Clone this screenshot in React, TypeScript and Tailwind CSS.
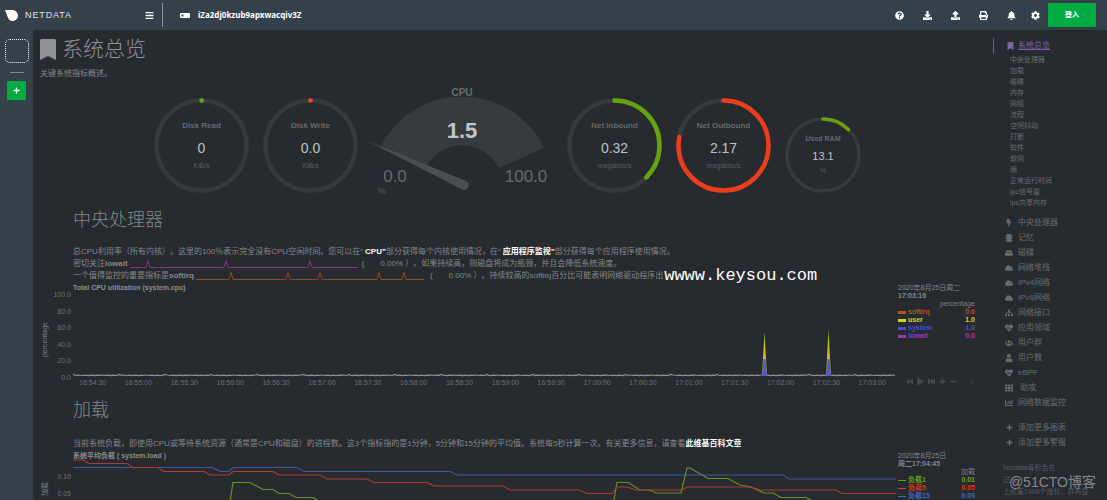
import { ReactNode } from 'react';
import {
  FaBars, FaBell, FaBolt, FaBookmark, FaChartBar, FaCloud, FaCog, FaDownload, FaFastForward, FaBackward,
  FaHdd, FaHeartbeat, FaMicrochip, FaMinus, FaPlay, FaPlus, FaPrint, FaQuestionCircle, FaSitemap, FaSort,
  FaTh, FaUpload, FaUser, FaUsers,
} from 'react-icons/fa';

interface RingProps { title: string; value: string; unit: string; percent: number; color: string; small?: boolean; }
interface LegendRow { name: string; value: string; color: string; bar: string; }
interface ChartProps {
  title: string;
  unit: string;
  axis: ReactNode;
  date: string[];
  legend: LegendRow[];
  children: ReactNode;
}

const subMenu = ['中央处理器', '加载', '磁碟', '内存', '网络', '流程', '空闲抖动', '打断', '软件', '软网', '熵', '正常运行时间', 'ipc信号量', 'ipc共享内存'];

const mainMenu = [
  { icon: <FaBolt />, label: '中央处理器' },
  { icon: <FaMicrochip />, label: '记忆' },
  { icon: <FaHdd />, label: '磁碟' },
  { icon: <FaCloud />, label: '网络堆栈' },
  { icon: <FaCloud />, label: 'IPv4网络' },
  { icon: <FaCloud />, label: 'IPv6网络' },
  { icon: <FaSitemap />, label: '网络接口' },
  { icon: <FaHeartbeat />, label: '应用领域' },
  { icon: <FaUsers />, label: '用户群' },
  { icon: <FaUser />, label: '用户数' },
  { icon: <FaHeartbeat />, label: 'eBPF' },
  { icon: <FaTh />, label: '\u00a0助攻' },
  { icon: <FaChartBar />, label: '网络数据监控' },
];

const cpuTimes = [
  '16:54:30', '16:55:00', '16:55:30', '16:56:00', '16:56:30', '16:57:00', '16:57:30', '16:58:00', '16:58:30',
  '16:59:00', '16:59:30', '17:00:00', '17:00:30', '17:01:00', '17:01:30', '17:02:00', '17:02:30', '17:03:00',
];

const cpuLegend: LegendRow[] = [
  { name: 'softirq', value: '0.0', color: 'text-[#b5501f]', bar: 'h-[3px] bg-[#b5501f]' },
  { name: 'user', value: '1.0', color: 'text-[#d3d62a]', bar: 'h-[3px] bg-[#d3d62a]' },
  { name: 'system', value: '1.0', color: 'text-[#474fc4]', bar: 'h-[3px] bg-[#474fc4]' },
  { name: 'iowait', value: '0.0', color: 'text-[#a03aa6]', bar: 'h-[3px] bg-[#a03aa6]' },
];

const loadLegend: LegendRow[] = [
  { name: '负载1', value: '0.01', color: 'text-[#66a30f]', bar: 'h-px bg-[#66a30f]' },
  { name: '负荷5', value: '0.05', color: 'text-[#dc3912]', bar: 'h-px bg-[#dc3912]' },
  { name: '负载15', value: '0.09', color: 'text-[#3a66c0]', bar: 'h-px bg-[#3a66c0]' },
];

// Idle noise along the bottom of the CPU chart
const cpuNoise = Array.from({ length: 412 }, (_, i) => {
  const jitter = (i * 37) % 23 === 0 ? 1.2 : ((i * 29) % 11) * 0.06;
  return `${i * 2},${83.6 - jitter}`;
}).join(' ');

function Ring({ title, value, unit, percent, color, small }: RingProps) {
  return (
    <div className={`relative flex flex-col items-center ${small ? 'h-[76px] w-[76px] pt-[17px]' : 'h-[95px] w-[95px] pt-[22px]'}`}>
      <svg viewBox="0 0 95 95" className="absolute inset-0 h-full w-full" fill="none">
        <circle cx="47.5" cy="47.5" r="45" stroke="#363a3f" strokeWidth="4.5" />
        <circle
          cx="47.5" cy="47.5" r="45" stroke={color} strokeWidth="4.5" strokeLinecap="round"
          pathLength="100" strokeDasharray={`${percent} 100`} transform="rotate(-90 47.5 47.5)"
        />
      </svg>
      <span className={`font-bold text-[#65686b] ${small ? 'text-[7px] leading-[10px]' : 'text-[8px] leading-[12px]'}`}>{title}</span>
      <span className={`text-[#bfc1c4] ${small ? 'mt-[5px] text-[11px] leading-[14px]' : 'mt-[7px] text-[14px] leading-[18px]'}`}>{value}</span>
      <span className={`text-[#5a5d60] ${small ? 'mt-1 text-[7px] leading-[8px]' : 'mt-1 text-[7px] leading-[10px]'}`}>{unit}</span>
    </div>
  );
}

function CpuGauge() {
  return (
    <svg viewBox="0 0 181 107" className="h-[107px] w-[181px] overflow-visible">
      <path d="M8 62 A91 91 0 0 1 172 62 L127 82 A41.5 41.5 0 0 0 53 82 Z" fill="#373b3e" />
      <path d="M-4 55 L94 95 A4.5 4.5 0 0 1 90 103.500 Z" fill="#4a4d52" />
      <g textAnchor="middle">
        <text x="90" y="10" fontSize="10" fontWeight="700" fill="#686b6e">CPU</text>
        <text x="90" y="52" fontSize="22" fontWeight="700" fill="#c3c4c6">1.5</text>
        <text x="23" y="96" fontSize="17" fill="#66696c">0.0</text>
        <text x="154" y="96" fontSize="17" fill="#66696c">100.0</text>
        <text x="10" y="108" fontSize="9" fill="#5c5f62">%</text>
      </g>
    </svg>
  );
}

function Sparkline({ peaks, stroke }: { peaks: number[]; stroke: string }) {
  const d = peaks.map(x => `L${x - 2} 8.500 L${x} 1.500 L${x + 2} 8.500`).join(' ');
  return (
    <svg viewBox="0 0 228 10" className="mx-[2px] inline-block h-[10px] w-[228px] align-middle" fill="none">
      <path d={`M0 8.500 ${d} L228 8.500`} stroke={stroke} strokeWidth="1" />
    </svg>
  );
}

function Chart({ title, unit, axis, date, legend, children }: ChartProps) {
  return (
    <div className="mt-[2px] flex text-[7px] leading-[8px] text-[#6d7074]">
      <div className="flex w-[33px] shrink-0 justify-between pr-[2px] pl-px">
        <span className="rotate-180 self-center pb-[6px] text-[#7d8084] [text-orientation:sideways] [writing-mode:vertical-rl]">{unit}</span>
        {axis}
      </div>
      <div className="min-w-0 flex-1">
        <h3 className="text-[7px] leading-[8px] font-bold text-[#8b8e92]">{title}</h3>
        {children}
      </div>
      <div className="ml-[2px] flex w-[77px] shrink-0 flex-col">
        <span className="text-[#84878b]">{date[0]}</span>
        <span className="font-bold text-[#84878b]">{date[1]}</span>
        <table className="w-full">
          <thead>
            <tr><th colSpan={2} className="text-right font-normal text-[#7b7e82]">{unit}</th></tr>
          </thead>
          <tbody>
            {legend.map(row => (
              <tr key={row.name} className={`font-bold ${row.color}`}>
                <td>
                  <span className="flex items-center gap-[2px]"><i className={`w-2 ${row.bar}`} />{row.name}</span>
                </td>
                <td className="text-right">{row.value}</td>
              </tr>
            ))}
          </tbody>
        </table>
        {/* Chart pan / zoom controls */}
        {unit === 'percentage' && (
          <div className="mt-auto mb-[5px] flex items-center gap-1 pl-2 text-[7px] text-[#474a4e]">
            <button aria-label="backward"><FaBackward /></button>
            <button aria-label="play"><FaPlay /></button>
            <button aria-label="forward"><FaFastForward /></button>
            <button aria-label="zoom in"><FaPlus /></button>
            <button aria-label="zoom out"><FaMinus /></button>
            <button aria-label="resize" className="ml-auto text-[#36393d]"><FaSort /></button>
          </div>
        )}
      </div>
    </div>
  );
}

export default function App() {
  return (
    <div className="relative flex h-screen flex-col overflow-hidden bg-[#272b30] font-['Liberation_Sans','Noto_Sans_CJK_SC',sans-serif] text-[8px] leading-[12px] text-[#84878b] [text-spacing-trim:space-all]">
      <header className="flex h-[30px] shrink-0 items-center bg-[#35414a] pr-[11px] text-white">
        <svg viewBox="0 0 13 11" className="ml-[5px] h-[11px] w-[13px]" fill="white">
          <path d="M0 0 H7 C10.500 0 13 2.500 13 5.500 C13 8.500 10.500 11 7.500 11 C5 11 3.500 9.500 2.700 7 Z" />
        </svg>
        <span className="ml-[7px] text-[9px] tracking-widest text-[#dfe3e6]">NETDATA</span>
        <button aria-label="menu" className="ml-[73px] text-[9px]"><FaBars /></button>
        <div className="ml-[8px] h-6 w-px bg-[#8d979e]" />
        <svg viewBox="0 0 10 5" className="ml-[17px] h-[5px] w-[10px]">
          <rect width="10" height="5" rx="1" fill="white" />
          <rect x="1.500" y="1.500" width="2" height="2" fill="#35414a" />
        </svg>
        <span className="ml-2 font-['Noto_Sans'] text-[8px] font-bold">iZa2dj0kzub9apxwacqiv3Z</span>
        <div className="ml-auto flex items-center gap-[19px] text-[9px]">
          <button aria-label="help"><FaQuestionCircle /></button>
          <button aria-label="import"><FaDownload /></button>
          <button aria-label="export"><FaUpload /></button>
          <button aria-label="print"><FaPrint /></button>
          <button aria-label="alarms"><FaBell /></button>
          <button aria-label="settings" className="-ml-1"><FaCog /></button>
        </div>
        <button className="ml-2 h-6 w-12 rounded-[1px] bg-[#00ab44] text-[7px] font-bold shadow">登入</button>
      </header>

      <div className="flex min-h-0 flex-1">
        <nav className="flex w-[33px] shrink-0 flex-col items-center bg-[#35414a] pt-[9px]">
          <button aria-label="workspace" className="h-6 w-6 rounded-[5px] border border-dotted border-white" />
          <div className="mt-[9px] h-px w-[14px] bg-[#7d888f]" />
          <button aria-label="add" className="mt-2 flex h-[19px] w-[19px] items-center justify-center rounded-[1px] bg-[#00ab44] text-[7px] text-white"><FaPlus /></button>
        </nav>

        <main className="min-w-0 flex-1 overflow-hidden pt-2 pr-[18px] pl-[7px]">
          <h1 className="flex items-center gap-[6px] text-[21px] leading-[22px] font-light text-[#909296]">
            <svg viewBox="0 0 16 21" className="h-[21px] w-4" fill="currentColor">
              <path d="M0 1.500 Q0 0 1.500 0 H14.500 Q16 0 16 1.500 V21 L8 17 L0 21 Z" />
            </svg>
            系统总览
          </h1>
          <p className="mt-2">关键系统指标概述。</p>

          <div className="mt-[6px] flex items-end justify-center gap-[14px]">
            <Ring title="Disk Read" value="0" unit="KiB/s" percent={0.1} color="#6fa21c" />
            <Ring title="Disk Write" value="0.0" unit="KiB/s" percent={0.1} color="#e04a26" />
            <CpuGauge />
            <Ring title="Net Inbound" value="0.32" unit="megabits/s" percent={37.5} color="#66a30f" />
            <Ring title="Net Outbound" value="2.17" unit="megabits/s" percent={78} color="#ee3d1d" />
            <Ring title="Used RAM" value="13.1" unit="%" percent={12.5} color="#66a30f" small />
          </div>

          <section>
            <h2 className="mt-[17px] pl-[33px] text-[18px] leading-[20px] font-light text-[#84878b]">中央处理器</h2>
            <div className="mt-4 pl-[33px] whitespace-nowrap">
              <p>
                总CPU利用率（所有内核）。这里的100％表示完全没有CPU空闲时间。您可以在“
                <a href="#cpu" className="font-bold text-white"> CPU”</a>部分获得每个内核使用情况，在“
                <a href="#apps" className="font-bold text-white"> 应用程序监视”</a>部分获得每个应用程序使用情况。
              </p>
              <p className="flex items-center">
                密切关注<b>iowait</b>
                <Sparkline peaks={[18, 96, 180]} stroke="#7e3487" />
                <span className="ml-[2px]">(</span>
                <span className="ml-4">0.00% ）。如果持续高，则磁盘将成为瓶颈，并且会降低系统速度。</span>
              </p>
              <p className="flex items-center">
                一个值得监控的重要指标是<b>softirq</b>
                <Sparkline peaks={[35, 92, 124, 183, 208]} stroke="#8d4c22" />
                <span className="ml-1">(</span>
                <span className="ml-4">0.00% ）。持续较高的softirq百分比可能表明网络驱动程序出</span>
              </p>
            </div>
            <Chart
              title="Total CPU utilization (system.cpu)"
              unit="percentage"
              date={['2020年8月25日周二', '17:03:16']}
              legend={cpuLegend}
              axis={
                <div className="mt-[7px] flex h-[91px] flex-col justify-between text-right">
                  {['100.0', '80.0', '60.0', '40.0', '20.0', '0.0'].map(v => <span key={v}>{v}</span>)}
                </div>
              }
            >
              <svg viewBox="0 0 823 86" preserveAspectRatio="none" className="block h-[86px] w-full">
                <polyline points={cpuNoise} fill="none" stroke="#8f8e8c" strokeWidth="1.2" />
                {[{ x: 691.5, top: 40 }, { x: 755.5, top: 38 }].map(s => (
                  <g key={s.x}>
                    <path d={`M${s.x - 2.5} 84 L${s.x} ${s.top} L${s.x + 2.5} 84 Z`} fill="#bcc41e" />
                    <path d={`M${s.x - 2.5} 84 L${s.x - 1} 67 H${s.x + 1} L${s.x + 2.5} 84 Z`} fill="#5a55cc" />
                  </g>
                ))}
              </svg>
              <div className="mt-px flex h-[11px] justify-between pr-[10px] pl-[6px]">
                {cpuTimes.map(t => <span key={t}>{t}</span>)}
              </div>
            </Chart>
          </section>

          <section>
            <h2 className="mt-[10px] pl-[33px] text-[18px] leading-[20px] font-light text-[#84878b]">加载</h2>
            <p className="mt-[18px] pl-[33px] whitespace-nowrap">
              当前系统负载，即使用CPU或等待系统资源（通常是CPU和磁盘）的进程数。这3个指标指的是1分钟，5分钟和15分钟的平均值。系统每5秒计算一次。有关更多信息，请查看
              <a href="#load" className="font-bold text-white">此维基百科文章</a>
            </p>
            <Chart
              title="系统平均负载 ( system.load )"
              unit="加载"
              date={['2020年8月25日', '周二17:04:45']}
              legend={loadLegend}
              axis={
                <div className="mt-[21px] flex flex-col gap-[9px] text-right">
                  {['0.10', '0.05'].map(v => <span key={v}>{v}</span>)}
                </div>
              }
            >
              <svg viewBox="73 460 823 60" preserveAspectRatio="none" className="block h-[60px] w-full overflow-visible" fill="none" strokeWidth="1.2">
                <polyline stroke="#38589e" points="73,467.5 212,467.5 220,471.5 229,471.5 233,467.5 297,467.5 304,471.5 450,471.5 457,475 783,475 789,479 896,479" />
                <polyline stroke="#66902a" points="210,519 229,508 233,482.5 250,482.5 263,489.5 273,489.5 279,493.5 289,493.5 296,497.5 313,497.5 320,502 600,515 613,505 617,482.5 628,482.5 640,490 650,490 656,493 681,493 687,468 690,468 708,478.5 728,478.5 740,485 751,487 764,493 773,493 781,497.5 806,497.5 815,502 896,506" />
                <polyline stroke="#b23a2a" points="73,460 83,460 89,463.5 127,463.5 133,467.5 158,467.5 164,471.5 204,471.5 210,475 229,475 233,471.5 273,471.5 279,475 320,475 327,479 367,479 374,482.5 427,482.5 434,486 503,486 510,490 579,490 587,493.5 612,493.5 617,487 627,487 636,490 682,490 687,487 751,487 760,490 836,490 842,493.5 896,493.5" />
              </svg>
            </Chart>
          </section>
        </main>

        <aside className="w-[114px] shrink-0 overflow-hidden pt-2 whitespace-nowrap text-[#686b6f]">
          <a href="#overview" className="flex h-4 items-center border-l border-[#6b5a8c] pl-[13px] text-[#7c63a5]">
            <FaBookmark className="h-2 w-[7px]" />
            <span className="ml-1 underline">系统总览</span>
          </a>
          <ul className="pl-[17px] text-[7px] leading-[11px]">
            {subMenu.map(item => <li key={item}><a href={`#${item}`}>{item}</a></li>)}
          </ul>
          <ul className="mt-[7px] pl-[11px] leading-[15px]">
            {mainMenu.map(item => (
              <li key={item.label}>
                <a href={`#${item.label}`} className="flex items-center gap-1">
                  <span className="flex w-[10px] justify-center text-[8px]">{item.icon}</span>{item.label}
                </a>
              </li>
            ))}
          </ul>
          <ul className="mt-[10px] pl-[11px] leading-[15px]">
            {['添加更多图表', '添加更多警报'].map(label => (
              <li key={label}>
                <a href={`#${label}`} className="flex items-center gap-1">
                  <span className="flex w-[10px] justify-center text-[7px]"><FaPlus /></span>{label}
                </a>
              </li>
            ))}
          </ul>
          <p className="mt-3 pl-[10px] text-[7px] leading-[12px] text-[#55585c]">
            Netdata每秒会在<br />过去<br />上收集1408个指标，并再显
          </p>
        </aside>
      </div>

      {/* Watermarks float over the page */}
      <span className="absolute top-[266px] left-[60%] font-['Liberation_Mono',monospace] text-[17px] leading-[20px] text-white">wwww.keysou.com</span>
      <span className="absolute right-[11px] bottom-[9px] text-[14px] leading-[18px] text-[#85878a]">@51CTO博客</span>
    </div>
  );
}
